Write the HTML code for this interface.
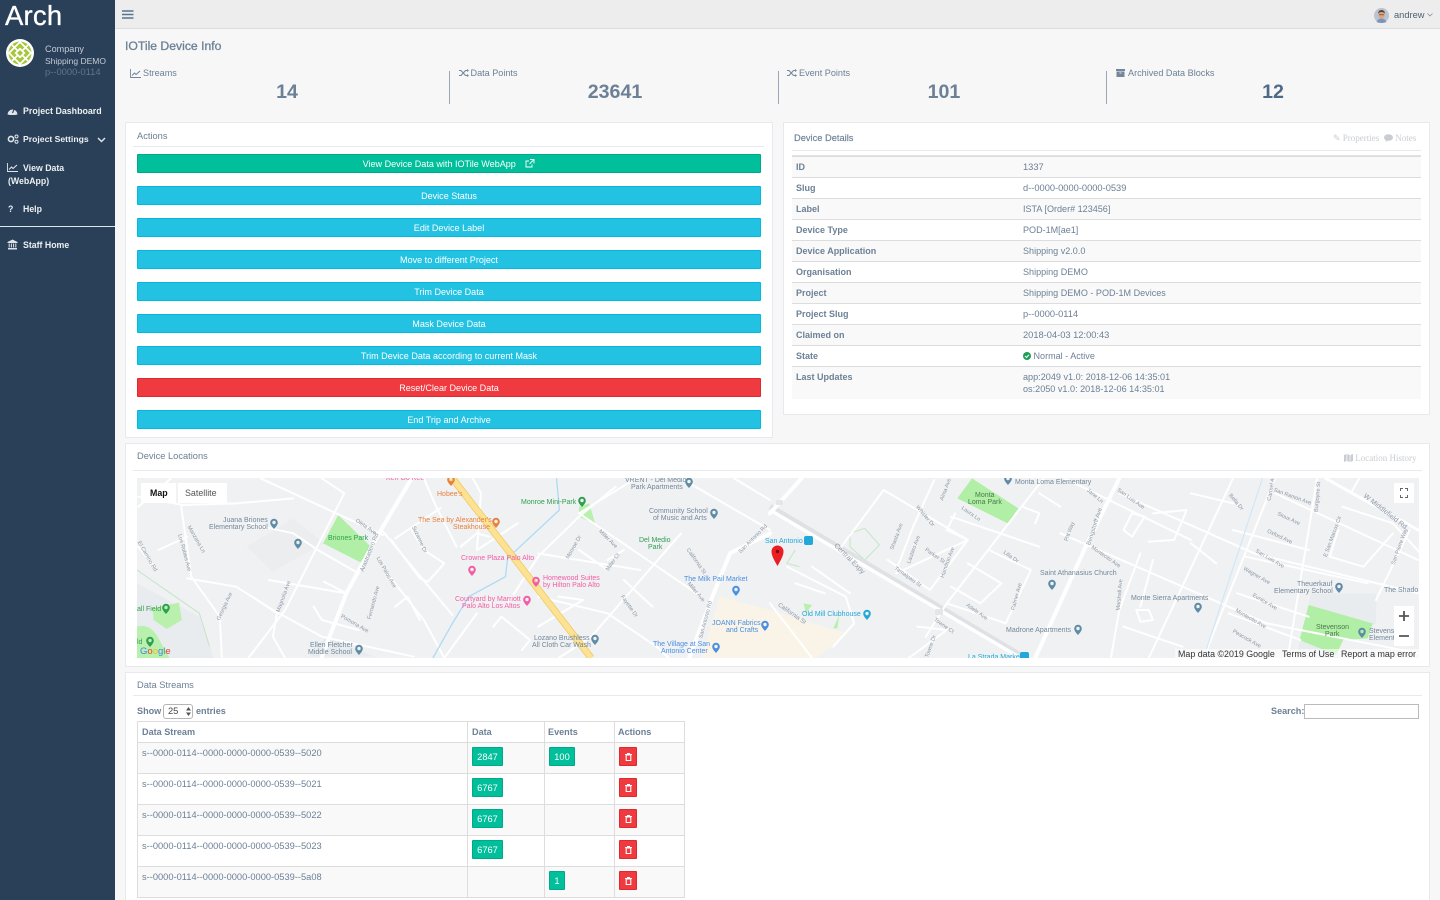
<!DOCTYPE html>
<html><head><meta charset="utf-8"><title>IOTile Device Info</title>
<style>
html,body{margin:0;padding:0;width:1440px;height:900px;overflow:hidden;background:#f7f7f7}
body{position:relative;font-family:"Liberation Sans",sans-serif;font-size:9.3px;color:#6c8096}
.a,.t,.b{position:absolute}
.t{white-space:nowrap;line-height:12px}
.bo{font-weight:bold;font-size:9.1px}
.panel{position:absolute;background:#fff;border:1px solid #e6e9ed;box-sizing:border-box}
.line{position:absolute;height:1px;background:#e6e9ed}
.b{left:137px;width:624px;height:19px;box-sizing:border-box;border:1px solid #00b9dc;background:#23c2e2;color:#fff;text-align:center;line-height:19px;border-radius:1px;font-size:9.05px}
.g{background:#00bf9a;border-color:#00a987}
.r{background:#ef3a40;border-color:#dc2a30}
.side{color:#ecf0f1;font-weight:bold;font-size:8.75px}
.row{position:absolute;left:792px;width:629px;height:21px;box-sizing:border-box;border-top:1px solid #ddd}
.row b{position:absolute;left:4px;top:4px;line-height:12px;font-size:9px}
.row span{position:absolute;left:231px;top:4px;line-height:12px}
.row span.n{font-size:9.05px}
.odd{background:#f9f9f9}
.bd{position:absolute;box-sizing:border-box;background:#00bf9a;border:1px solid #00a987;color:#fff;height:19px;line-height:19px;text-align:center;border-radius:1px}
.del{position:absolute;left:619px;width:18px;height:19px;box-sizing:border-box;background:#ef3a40;border:1px solid #dc2a30;border-radius:1px}
.vl{position:absolute;width:1px;background:#ddd}
.hl{position:absolute;height:1px;background:#ddd;left:137px;width:548px}
svg{position:absolute;overflow:hidden}
.rd path{fill:none;stroke:#fff;stroke-width:2;vector-effect:non-scaling-stroke;stroke-linecap:round;stroke-linejoin:round}
.lb text{font-family:"Liberation Sans",sans-serif;font-size:7px}
.st text{font-family:"Liberation Sans",sans-serif;font-size:5.5px;fill:#8b98a5;text-anchor:middle}
.big{font-weight:bold;font-size:19.6px;line-height:24px;text-align:center;width:160px;top:79.500px}
.lt{color:#c9cdd2;font-family:'Liberation Serif',serif;font-size:9px}
</style></head><body>

<div class="a" style="left:0;top:0;width:115px;height:900px;background:#2a3f58"></div>
<div class="t" style="left:5px;top:1px;font-size:27.500px;line-height:30px;color:#fff;letter-spacing:.2px;-webkit-text-stroke:.3px #fff">Arch</div>
<svg style="left:6px;top:39px" width="28" height="28" viewBox="0 0 28 28">
<circle cx="14" cy="14" r="14" fill="#fff"/>
<circle cx="14" cy="14" r="11.5" fill="#a6c73c"/>
<path d="M14 3L25 14L14 25L3 14Z M6 6L22 22M22 6L6 22" fill="none" stroke="#fff" stroke-width="1.700"/>
<path d="M14 8.500L19.500 14L14 19.500L8.500 14Z" fill="#fff"/><path d="M14 11L17 14L14 17L11 14Z" fill="#a6c73c"/>
</svg>
<div class="t" style="left:45px;top:43px;color:#c3ccd6;font-size:9.1px">Company</div>
<div class="t" style="left:45px;top:55px;color:#c3ccd6;font-size:8.500px">Shipping DEMO</div>
<div class="t" style="left:45px;top:66px;color:#5f7690;font-size:9.4px">p--0000-0114</div>

<svg style="left:7px;top:106px" width="11" height="10" viewBox="0 0 11 10"><path d="M.5 8.500A5 5 0 1 1 10.500 8.500L8 9H3Z" fill="#dfe4e9"/><path d="M5.500 7L7 3.500" stroke="#2a3f58" stroke-width="1"/></svg>
<div class="t side" style="left:23px;top:105px;font-size:8.850px">Project Dashboard</div>
<svg style="left:7px;top:134px" width="12" height="10" viewBox="0 0 12 10"><circle cx="4" cy="5" r="2.600" fill="none" stroke="#dfe4e9" stroke-width="1.600"/><circle cx="9.500" cy="2.500" r="1.500" fill="none" stroke="#dfe4e9"/><circle cx="9.500" cy="7.800" r="1.500" fill="none" stroke="#dfe4e9"/></svg>
<div class="t side" style="left:23px;top:133px;font-size:8.650px">Project Settings</div>
<svg style="left:97px;top:137px" width="9" height="6" viewBox="0 0 9 6"><path d="M1 1L4.500 4.500L8 1" fill="none" stroke="#dfe4e9" stroke-width="1.500"/></svg>
<svg style="left:7px;top:163px" width="11" height="9" viewBox="0 0 11 9"><path d="M.5 0V8.500H11" fill="none" stroke="#dfe4e9" stroke-width=".9"/><path d="M2 6.500L4.500 4L6 5.500L10 2" fill="none" stroke="#dfe4e9" stroke-width="1.100"/></svg>
<div class="t side" style="left:23px;top:162px">View Data</div>
<div class="t side" style="left:8px;top:175px">(WebApp)</div>
<div class="t side" style="left:8px;top:203px">?</div>
<div class="t side" style="left:23px;top:203px">Help</div>
<div class="a" style="left:0;top:226px;width:115px;height:1px;background:#dfe4e9"></div>
<svg style="left:7px;top:239px" width="11" height="11" viewBox="0 0 11 11"><path d="M5.500 .5L10.500 3V4H.5V3Z M1 9H10V10.500H1Z" fill="#dfe4e9"/><path d="M2.200 4.500V8.500M4.400 4.500V8.500M6.600 4.500V8.500M8.800 4.500V8.500" stroke="#dfe4e9" stroke-width="1"/></svg>
<div class="t side" style="left:23px;top:239px">Staff Home</div>

<div class="a" style="left:115px;top:0;width:1325px;height:28px;background:#ededed;border-bottom:1px solid #d9dee4"></div>
<svg style="left:122px;top:10px" width="12" height="10" viewBox="0 0 12 10"><path d="M0 1H11.500M0 4.500H11.500M0 8H11.500" stroke="#5a738e" stroke-width="1.600"/></svg>
<svg style="left:1374px;top:8px" width="15" height="15" viewBox="0 0 15 15"><circle cx="7.500" cy="7.500" r="7.500" fill="#b9c4d2"/><ellipse cx="7.500" cy="6.500" rx="3.300" ry="4" fill="#d9a585"/><path d="M4 5.500Q4.500 2 7.500 2Q10.500 2 11 5.500Q9 3.800 7.500 4Q5.500 4 4 5.500Z" fill="#5b4030"/><path d="M2.500 14Q4 10.500 7.500 10.500Q11 10.500 12.500 14Q7.500 16 2.500 14Z" fill="#7f93b5"/><path d="M5.200 6.800H9.800" stroke="#5b4030" stroke-width=".7"/></svg>
<div class="t" style="left:1394px;top:9px;color:#4f5f6f">andrew</div>
<svg style="left:1427px;top:13px" width="6" height="4" viewBox="0 0 6 4"><path d="M.5 .5L3 3L5.500 .5" fill="none" stroke="#73879c" stroke-width=".7"/></svg>

<div class="t" style="left:125px;top:39.500px;font-size:12.200px;line-height:13px;-webkit-text-stroke:.3px #6c8096">IOTile Device Info</div>

<svg style="left:130px;top:69px" width="11" height="9" viewBox="0 0 11 9"><path d="M.5 0V8.500H11" fill="none" stroke="#73879c" stroke-width=".9"/><path d="M2 6.500L4.500 4L6 5.500L10 2" fill="none" stroke="#73879c" stroke-width="1.100"/></svg>
<div class="t" style="left:143px;top:67px;font-size:9.1px">Streams</div>
<div class="t big" style="left:207px">14</div>
<div class="a" style="left:449px;top:71px;width:1px;height:33px;background:#9aa8b6"></div>
<svg style="left:459px;top:69px" width="10" height="8" viewBox="0 0 10 8"><path d="M0 1.500H2L6.500 6.500H9M0 6.500H2L6.500 1.500H9" fill="none" stroke="#73879c" stroke-width="1.100"/><path d="M8 0L10 1.500L8 3ZM8 5L10 6.500L8 8Z" fill="#73879c"/></svg>
<div class="t" style="left:470.500px;top:67px;font-size:9.1px">Data Points</div>
<div class="t big" style="left:535px">23641</div>
<div class="a" style="left:778px;top:71px;width:1px;height:33px;background:#9aa8b6"></div>
<svg style="left:787px;top:69px" width="10" height="8" viewBox="0 0 10 8"><path d="M0 1.500H2L6.500 6.500H9M0 6.500H2L6.500 1.500H9" fill="none" stroke="#73879c" stroke-width="1.100"/><path d="M8 0L10 1.500L8 3ZM8 5L10 6.500L8 8Z" fill="#73879c"/></svg>
<div class="t" style="left:799px;top:67px;font-size:9.1px">Event Points</div>
<div class="t big" style="left:864px">101</div>
<div class="a" style="left:1106px;top:71px;width:1px;height:33px;background:#9aa8b6"></div>
<svg style="left:1116px;top:69px" width="10" height="8" viewBox="0 0 10 8"><path d="M0 0H9V2H0ZM.5 2.500H8.500V8H.5Z" fill="#73879c"/><path d="M3.500 4H5.500" stroke="#f7f7f7" stroke-width=".8"/></svg>
<div class="t" style="left:1128px;top:67px;font-size:9.1px">Archived Data Blocks</div>
<div class="t big" style="left:1193px;color:#4f6a87">12</div>

<div class="panel" style="left:125px;top:122px;width:648px;height:316px"></div>
<div class="t" style="left:137px;top:130px">Actions</div>
<div class="line" style="left:133px;top:146px;width:631px"></div>
<div class="b g" style="top:154px">View Device Data with IOTile WebApp <svg style="position:static;vertical-align:-1px;margin-left:7px" width="10" height="9" viewBox="0 0 10 9"><path d="M7 5.500V8H1V2H4M5 .5H9V4.500M9 .5L4.500 5" fill="none" stroke="#fff" stroke-width=".9"/></svg></div>
<div class="b" style="top:186px">Device Status</div>
<div class="b" style="top:218px">Edit Device Label</div>
<div class="b" style="top:250px">Move to different Project</div>
<div class="b" style="top:282px">Trim Device Data</div>
<div class="b" style="top:314px">Mask Device Data</div>
<div class="b" style="top:346px">Trim Device Data according to current Mask</div>
<div class="b r" style="top:378px">Reset/Clear Device Data</div>
<div class="b" style="top:410px">End Trip and Archive</div>

<div class="panel" style="left:783px;top:122px;width:647px;height:293px"></div>
<div class="t" style="left:794px;top:132px;-webkit-text-stroke:.15px #6c8096">Device Details</div>
<div class="t lt" style="left:1333px;top:132px">✎ Properties</div>
<div class="t lt" style="left:1384px;top:132px"><svg style="position:static;vertical-align:-1px" width="9" height="8" viewBox="0 0 9 8"><ellipse cx="4.500" cy="3.500" rx="4.500" ry="3.300" fill="#c9cdd2"/><path d="M2 6L1.500 8L4 6.500Z" fill="#c9cdd2"/></svg> Notes</div>
<div class="line" style="left:792px;top:150px;width:629px"></div>
<div class="a" style="left:792px;top:155px;width:629px;height:2px;background:#e2e2e2"></div>
<div class="row odd" style="top:156px"><b>ID</b><span>1337</span></div>
<div class="row" style="top:177px"><b>Slug</b><span>d--0000-0000-0000-0539</span></div>
<div class="row odd" style="top:198px"><b>Label</b><span class="n">ISTA [Order# 123456]</span></div>
<div class="row" style="top:219px"><b>Device Type</b><span class="n">POD-1M[ae1]</span></div>
<div class="row odd" style="top:240px"><b>Device Application</b><span class="n">Shipping v2.0.0</span></div>
<div class="row" style="top:261px"><b>Organisation</b><span class="n">Shipping DEMO</span></div>
<div class="row odd" style="top:282px"><b>Project</b><span class="n">Shipping DEMO - POD-1M Devices</span></div>
<div class="row" style="top:303px"><b>Project Slug</b><span>p--0000-0114</span></div>
<div class="row odd" style="top:324px"><b>Claimed on</b><span>2018-04-03 12:00:43</span></div>
<div class="row" style="top:345px"><b>State</b><span class="n"><svg style="position:static;vertical-align:-1px" width="8" height="8" viewBox="0 0 8 8"><circle cx="4" cy="4" r="4" fill="#1f9d55"/><path d="M2 4L3.500 5.500L6 2.800" fill="none" stroke="#fff" stroke-width="1.100"/></svg> Normal - Active</span></div>
<div class="row odd" style="top:366px;height:33px"><b>Last Updates</b><span style="font-size:9.1px">app:2049 v1.0: 2018-12-06 14:35:01<br>os:2050 v1.0: 2018-12-06 14:35:01</span></div>

<div class="panel" style="left:125px;top:443px;width:1305px;height:224px"></div>
<div class="t" style="left:137px;top:450px">Device Locations</div>
<div class="t lt" style="left:1344px;top:452px"><svg style="position:static;vertical-align:-1px" width="9" height="8" viewBox="0 0 9 8"><path d="M0 1L2.500 0V7L0 8ZM3.200 0L5.700 1V8L3.200 7ZM6.400 1L9 0V7L6.400 8Z" fill="#c9cdd2"/></svg> Location History</div>
<div class="line" style="left:133px;top:470px;width:1289px"></div>

<svg style="left:137px;top:478px" width="1282" height="180" viewBox="137 478 1282 180">
<defs><path id="p" d="M0 0C-3.200 -3.500 -3.800 -5 -3.800 -6.500A3.800 3.800 0 1 1 3.800 -6.500C3.800 -5 3.200 -3.500 0 0ZM0 -8.200A1.700 1.700 0 1 0 0 -4.800A1.700 1.700 0 1 0 0 -8.200Z" fill-rule="evenodd"/></defs>
<rect x="137" y="478" width="1282" height="180" fill="#f0f1f3"/>
<g style="filter:blur(.3px)">
<g transform="translate(130,450) scale(.40816,.33333)">
<path d="M17 400L170 500L205 624H17Z" fill="#e9ecee"/>
<path d="M285 290L400 205L475 280L350 365Z" fill="#ebedef"/>
<path d="M480 560L600 620H440Z" fill="#e9ecee"/>
<path d="M1400 624L1445 440L1568 480V624Z" fill="#f9f4e7"/>
<path d="M510 195L590 290L565 337L473 280Z" fill="#b1efa6"/>
<path d="M55 475L120 458L127 510L90 537L58 510Z" fill="#b9f0ae"/>
<path d="M17 530Q45 520 65 555L97 624H17Z" fill="#b9f0ae"/>
<path d="M1100 170L1125 160L1140 222L1100 200Z" fill="#b9f0ae"/>
<g class="rd">
<path style="stroke-width:4" d="M690 85L610 250L530 430L470 620"/>
<path d="M320 85L620 255M125 165L150 380L220 500L225 624M20 140L130 165L260 160L400 145M525 130L380 480L290 624M470 85L525 130M620 245L790 495M650 265L760 175M690 240L720 300L770 340L730 395L710 385L640 270M260 410L350 480L470 560L695 620M260 410L140 385M340 390L530 430M475 395L530 430M560 370L460 300L400 250L290 220M630 370L720 510L770 624M720 85L750 170L800 290M840 85L860 130L850 300M1190 110L1100 200L1000 320L920 470M1100 190L1400 440M1350 250L1130 560L1050 624M1000 310L1250 360M1000 440L1170 490L1290 590L1320 624M850 490L770 624M1050 440L1110 450L1000 530M300 440L360 490L350 560L380 624M450 470L470 510L560 540M650 470L680 440L710 510M890 530L910 500L980 570L960 600M1240 85L1100 190M1480 85L1568 150M1350 85L1568 240M1210 390L1280 470M1170 330L1210 300M1100 300L1170 360M850 300L950 220M810 290L850 250L880 260M20 290L60 350M70 300L140 260M20 170L60 130L100 85"/>
<path style="stroke-width:4" d="M1568 250L1470 310L1430 430L1370 624"/>
</g>
<path d="M1045 85L1052 180L925 325L920 380L830 440L790 520L742 624" fill="none" stroke="#aedaf5" stroke-width="1.300" vector-effect="non-scaling-stroke"/>
<path d="M17 360L170 490L195 590" fill="none" stroke="#c5e3c8" stroke-width="1" vector-effect="non-scaling-stroke"/>
<path d="M790 85L1130 624" fill="none" stroke="#ecc95e" stroke-width="7" vector-effect="non-scaling-stroke"/>
<path d="M790 85L1130 624" fill="none" stroke="#fde293" stroke-width="5.500" vector-effect="non-scaling-stroke"/>
</g>
<g transform="translate(770,450) scale(.42088,.33333)">
<path d="M0 480L100 520L185 550L110 624H0Z" fill="#f9f4e7"/>
<path d="M1285 430L1440 430L1440 520L1360 570L1345 624H1250Z" fill="#e9ecee"/>
<path d="M480 85L590 175L565 220L445 145Z" fill="#b1efa6"/>
<path d="M1280 465L1432 520L1420 565L1362 570L1345 615L1258 570Z" fill="#b1efa6"/>
<path d="M80 460L100 465L85 490ZM165 495L160 535L150 535Z" fill="#b9f0ae"/>
<path d="M190 250L225 235L260 285L225 330L190 290Z M60 300L40 340L70 350" fill="none" stroke="#c3e8c2" stroke-width="1" vector-effect="non-scaling-stroke"/>
<path d="M0 170L600 620" fill="none" stroke="#dfe1e4" stroke-width="6" vector-effect="non-scaling-stroke"/>
<path d="M0 180L590 620" fill="none" stroke="#fff" stroke-width="3.500" vector-effect="non-scaling-stroke"/>
<g class="rd">
<path style="stroke-width:4" d="M75 85L0 190M830 85L750 290L630 624"/>
<path d="M650 85L420 460L370 560M270 120L170 290M270 120L470 270L380 420L280 330M470 270L300 370M430 200L640 290M440 190L420 240L470 270M520 300L620 360L560 520L420 460M470 340L550 400L500 460L430 410M390 90L340 230L300 360M700 85L1000 270M830 130L1150 310L1540 430M690 250L1180 520L1540 610M1100 85L900 624M1200 85L1030 624M1300 85L1230 624M1200 130L1540 330M1100 240L1280 300M1130 320L1420 400M1110 430L1280 500M1090 490L1260 570M40 350L180 440L200 520L150 590M100 350L190 430M60 400L130 430M640 130L690 170M600 170L640 190L630 220M860 190L890 200L860 260L840 240L860 190M910 190L990 180L960 270L900 275M880 310L830 480L810 624M910 330L880 470M1000 280L1060 340M840 530L980 590M870 480L900 480L910 510L880 515ZM1360 170L1480 220L1560 330M1480 250L1410 350L1330 320L1350 240M1400 85L1380 130M1520 240L1440 450M1000 130L1100 160M350 530L420 540L330 624M0 460L100 624"/>
<path style="stroke-width:3" d="M1320 85L1540 240"/>
</g>
<path d="M1170 85L1030 624" fill="none" stroke="#cfe8f8" stroke-width="1.200" vector-effect="non-scaling-stroke"/>
</g>

<g class="lb">
<text x="386" y="480" fill="#f25da4">Ken Go Kee</text>
<use href="#p" x="451" y="486" fill="#e8813a"/>
<text x="437" y="496" fill="#e8813a">Hobee's</text>
<text x="418" y="522" fill="#e8813a">The Sea by Alexander's</text>
<text x="453" y="529" fill="#e8813a">Steakhouse</text>
<use href="#p" x="496" y="528" fill="#e8813a"/>
<text x="461" y="560" fill="#f25da4">Crowne Plaza Palo Alto</text>
<use href="#p" x="472" y="576" fill="#f25da4"/>
<use href="#p" x="536" y="587" fill="#f25da4"/>
<text x="543" y="580" fill="#f25da4">Homewood Suites</text>
<text x="543" y="587" fill="#f25da4">by Hilton Palo Alto</text>
<text x="455" y="601" fill="#f25da4">Courtyard by Marriott</text>
<text x="462" y="608" fill="#f25da4">Palo Alto Los Altos</text>
<use href="#p" x="527" y="606" fill="#f25da4"/>
<text x="521" y="504" fill="#2e9e4f">Monroe Mini-Park</text>
<use href="#p" x="582" y="507" fill="#2e9e4f"/>
<text x="639" y="542" fill="#2e9e4f">Del Medio</text>
<text x="648" y="549" fill="#2e9e4f">Park</text>
<text x="328" y="540" fill="#2e9e4f">Briones Park</text>
<text x="137" y="611" fill="#2e9e4f">all Field</text>
<use href="#p" x="166" y="614" fill="#2e9e4f"/>
<text x="137" y="644" fill="#2e9e4f">ld</text>
<use href="#p" x="150" y="647" fill="#2e9e4f"/>
<g fill="#74889a">
<text x="223" y="522">Juana Briones</text><text x="209" y="529">Elementary School</text>
<use href="#p" x="274" y="529" fill="#5f8ba5"/>
<use href="#p" x="298" y="549" fill="#5f8ba5"/>
<text x="310" y="647">Ellen Fletcher</text><text x="308" y="654">Middle School</text>
<use href="#p" x="359" y="655" fill="#5f8ba5"/>
<text x="625" y="482">VRENT - Del Medio</text><text x="631" y="489">Park Apartments</text>
<use href="#p" x="689" y="488" fill="#5f8ba5"/>
<text x="649" y="513">Community School</text><text x="653" y="520">of Music and Arts</text>
<use href="#p" x="714" y="519" fill="#5f8ba5"/>
<text x="534" y="640">Lozano Brushless</text><text x="532" y="647">All Cloth Car Wash</text>
<use href="#p" x="595" y="645" fill="#5f8ba5"/>
<text x="1015" y="484">Monta Loma Elementary</text>
<use href="#p" x="1008" y="485" fill="#5f8ba5"/>
<text x="1040" y="575">Saint Athanasius Church</text>
<use href="#p" x="1052" y="590" fill="#5f8ba5"/>
<text x="1131" y="600">Monte Sierra Apartments</text>
<use href="#p" x="1198" y="613" fill="#5f8ba5"/>
<text x="1006" y="632">Madrone Apartments</text>
<use href="#p" x="1078" y="635" fill="#5f8ba5"/>
<text x="1297" y="586">Theuerkauf</text><text x="1274" y="593">Elementary School</text>
<use href="#p" x="1339" y="593" fill="#5f8ba5"/>
<text x="1384" y="592">The Shado</text>
<use href="#p" x="1362" y="638" fill="#5f8ba5"/>
<text x="1369" y="633">Stevens</text><text x="1369" y="640">Element</text>
</g>
<text x="975" y="497" fill="#4a7a4a">Monta</text><text x="968" y="504" fill="#4a7a4a">Loma Park</text>
<text x="1316" y="629" fill="#4a7a4a">Stevenson</text><text x="1325" y="636" fill="#4a7a4a">Park</text>
<g fill="#4a8fe0">
<text x="684" y="581">The Milk Pail Market</text>
<use href="#p" x="736" y="596"/>
<text x="712" y="625">JOANN Fabrics</text><text x="726" y="632">and Crafts</text>
<use href="#p" x="765" y="631"/>
<text x="653" y="646">The Village at San</text><text x="661" y="653">Antonio Center</text>
<use href="#p" x="716" y="653"/>
</g>
<g fill="#21a8d8">
<text x="765" y="543">San Antonio</text>
<rect x="804" y="536" width="9" height="9" rx="2"/>
<text x="802" y="616">Old Mill Clubhouse</text>
<use href="#p" x="867" y="620"/>
<text x="968" y="659">La Strada Market</text>
<rect x="1020" y="652" width="9" height="9" rx="2"/>
</g>
</g>
<g class="st">
<rect x="776" y="500" width="7" height="5" rx="1" fill="#e4e6e8"/><rect x="935" y="609" width="8" height="6" rx="1" fill="#e4e6e8"/>
<text style="font-size:7px" transform="translate(1384,513) rotate(38)">W Middlefield Rd</text>
<text style="font-size:7px" transform="translate(848,560) rotate(45)">Central Expy</text>
<text style="font-size:6px" transform="translate(1096,527) rotate(-72)">Bengstorff Ave</text>
<text style="font-size:6px" transform="translate(371,553) rotate(-68)">Arastradero Rd</text>
<text style="font-size:6px" transform="translate(791,615) rotate(35)">California St</text>
<text transform="translate(365,528) rotate(35)">Oleta Ave</text>
<text transform="translate(385,573) rotate(60)">Los Palos Ave</text>
<text transform="translate(375,603) rotate(-75)">Fernando Ave</text>
<text transform="translate(354,625) rotate(30)">Pomona Ave</text>
<text transform="translate(226,607) rotate(-65)">Georgia Ave</text>
<text transform="translate(285,597) rotate(-70)">Magnolia Ave</text>
<text transform="translate(183,553) rotate(75)">Los Robles Ave</text>
<text transform="translate(195,540) rotate(60)">Manzana Ln</text>
<text transform="translate(146,557) rotate(60)">El Camino Rd</text>
<text transform="translate(418,540) rotate(65)">Suzanne Dr</text>
<text transform="translate(575,548) rotate(-60)">Monroe Dr</text>
<text transform="translate(695,562) rotate(55)">California St</text>
<text transform="translate(607,540) rotate(45)">Miller Ave</text>
<text transform="translate(614,563) rotate(-55)">Miller Ct</text>
<text transform="translate(695,593) rotate(50)">Miller Ave</text>
<text transform="translate(628,607) rotate(55)">Fayette Dr</text>
<text transform="translate(707,620) rotate(-75)">San Antonio Rd</text>
<text transform="translate(754,540) rotate(-45)">San Antonio Rd</text>
<text transform="translate(907,578) rotate(35)">Tamalpais St</text>
<text transform="translate(934,557) rotate(35)">Parker St</text>
<text transform="translate(949,563) rotate(-70)">Hamilton Ave</text>
<text transform="translate(915,550) rotate(-70)">Lautaro Ave</text>
<text transform="translate(898,537) rotate(-70)">Shasta Ave</text>
<text transform="translate(924,517) rotate(50)">Whisler Dr</text>
<text transform="translate(970,515) rotate(35)">Laura Ln</text>
<text transform="translate(947,490) rotate(-70)">Alma Ave</text>
<text transform="translate(1130,500) rotate(35)">San Luis Ave</text>
<text transform="translate(1094,497) rotate(40)">Jane Ln</text>
<text transform="translate(1071,532) rotate(-70)">Pitt Way</text>
<text transform="translate(1105,558) rotate(35)">Montecito Ave</text>
<text transform="translate(1010,558) rotate(35)">Lilla Dr</text>
<text transform="translate(1018,597) rotate(-75)">Palmer Ave</text>
<text transform="translate(976,613) rotate(35)">Adele Ave</text>
<text transform="translate(1121,595) rotate(-85)">Marshall Ave</text>
<text transform="translate(943,627) rotate(35)">Towne Ct</text>
<text transform="translate(932,647) rotate(-70)">Towne Dr</text>
<text transform="translate(1292,498) rotate(20)">San Ramon Ave</text>
<text transform="translate(1288,520) rotate(25)">Sioux Ave</text>
<text transform="translate(1279,538) rotate(25)">Oxford Ave</text>
<text transform="translate(1269,560) rotate(30)">San Luis Ave</text>
<text transform="translate(1256,577) rotate(30)">Wagner Ave</text>
<text transform="translate(1264,603) rotate(30)">Eunice Ave</text>
<text transform="translate(1250,620) rotate(30)">Montecito Ave</text>
<text transform="translate(1246,640) rotate(30)">Peacock Ave</text>
<text transform="translate(1235,503) rotate(50)">Bella Dr</text>
<text transform="translate(1319,497) rotate(-85)">Burgoyne St</text>
<text transform="translate(1273,487) rotate(-80)">Carmel Ave</text>
<text transform="translate(1401,547) rotate(-70)">San Pierre Way</text>
<text transform="translate(1334,537) rotate(-70)">E San Marcos Cir</text>
</g>
</g>
<path d="M777.500 566C773 558 771.500 555 771.500 551.500A6 6 0 1 1 783.500 551.500C783.500 555 782 558 777.500 566Z" fill="#ea1d25"/>
<circle cx="777.500" cy="551.500" r="1.700" fill="#7a0b10"/>
<rect x="141" y="483" width="86" height="20" fill="#fff"/>
<path d="M177 483V503" stroke="#e6e6e6"/>
<text x="150" y="496" font-family="Liberation Sans" font-size="8.800" font-weight="bold" fill="#111">Map</text>
<text x="185" y="496" font-family="Liberation Sans" font-size="8.900" fill="#555">Satellite</text>
<rect x="1394" y="483" width="20" height="20" fill="#fff"/>
<path d="M1400.500 491V488.500H1403M1405 488.500H1407.500V491M1400.500 495V497.500H1403M1405 497.500H1407.500V495" fill="none" stroke="#666" stroke-width="1"/>
<rect x="1394" y="606" width="20" height="40" fill="#fff"/>
<path d="M1399 616H1409M1404 611V621M1399 636H1409" stroke="#555" stroke-width="1.800"/>
<text x="140" y="654" font-family="Liberation Sans" font-size="9.500" fill="#4285f4">G<tspan fill="#ea4335">o</tspan><tspan fill="#fbbc05">o</tspan>g<tspan fill="#34a853">l</tspan><tspan fill="#ea4335">e</tspan></text>
<rect x="1175" y="649" width="244" height="9" fill="#fff" opacity=".6"/>
</svg>
<div class="t" style="left:1178px;top:648px;font-size:8.900px;color:#333">Map data ©2019 Google</div>
<div class="t" style="left:1282px;top:648px;font-size:8.900px;color:#333">Terms of Use</div>
<div class="t" style="left:1341px;top:648px;font-size:8.900px;color:#333">Report a map error</div>

<div class="panel" style="left:125px;top:672px;width:1305px;height:240px"></div>
<div class="t" style="left:137px;top:679px">Data Streams</div>
<div class="line" style="left:133px;top:695px;width:1289px"></div>
<div class="t bo" style="left:137px;top:705px">Show</div>
<div class="a" style="left:163px;top:704px;width:30px;height:15px;box-sizing:border-box;border:1px solid #b5b5b5;border-radius:3px;background:#fff"></div>
<div class="t" style="left:168px;top:705px;color:#444">25</div>
<svg style="left:186px;top:707px" width="5" height="9" viewBox="0 0 5 9"><path d="M2.500 0L5 3.500H0ZM2.500 9L0 5.500H5Z" fill="#555"/></svg>
<div class="t bo" style="left:196px;top:705px">entries</div>
<div class="t bo" style="left:1271px;top:705px">Search:</div>
<div class="a" style="left:1304px;top:704px;width:115px;height:15px;box-sizing:border-box;border:1px solid #bbb;background:#fff"></div>

<div class="a" style="left:138px;top:722px;width:547px;height:176px;background:#fff"></div>
<div class="a" style="left:138px;top:743px;width:547px;height:31px;background:#f9f9f9"></div>
<div class="a" style="left:138px;top:805px;width:547px;height:31px;background:#f9f9f9"></div>
<div class="a" style="left:138px;top:867px;width:547px;height:31px;background:#f9f9f9"></div>
<div class="hl" style="top:721px"></div><div class="hl" style="top:742px"></div><div class="hl" style="top:773px"></div><div class="hl" style="top:804px"></div><div class="hl" style="top:835px"></div><div class="hl" style="top:866px"></div><div class="hl" style="top:897px"></div>
<div class="vl" style="left:137px;top:721px;height:177px"></div><div class="vl" style="left:467px;top:721px;height:177px"></div><div class="vl" style="left:544px;top:721px;height:177px"></div><div class="vl" style="left:614px;top:721px;height:177px"></div><div class="vl" style="left:684px;top:721px;height:177px"></div>
<div class="t bo" style="left:142px;top:726px">Data Stream</div>
<div class="t bo" style="left:472px;top:726px">Data</div>
<div class="t bo" style="left:548px;top:726px">Events</div>
<div class="t bo" style="left:618px;top:726px">Actions</div>
<div class="t" style="left:142px;top:747px">s--0000-0114--0000-0000-0000-0539--5020</div>
<div class="t" style="left:142px;top:778px">s--0000-0114--0000-0000-0000-0539--5021</div>
<div class="t" style="left:142px;top:809px">s--0000-0114--0000-0000-0000-0539--5022</div>
<div class="t" style="left:142px;top:840px">s--0000-0114--0000-0000-0000-0539--5023</div>
<div class="t" style="left:142px;top:871px">s--0000-0114--0000-0000-0000-0539--5a08</div>
<div class="bd" style="left:472px;top:747px;width:31px">2847</div>
<div class="bd" style="left:472px;top:778px;width:31px">6767</div>
<div class="bd" style="left:472px;top:809px;width:31px">6767</div>
<div class="bd" style="left:472px;top:840px;width:31px">6767</div>
<div class="bd" style="left:549px;top:747px;width:26px">100</div>
<div class="bd" style="left:549px;top:871px;width:16px">1</div>
<div class="del" style="top:747px"><svg style="left:4.500px;top:4.500px" width="7" height="8" viewBox="0 0 7 8"><path d="M0 1.500H7M2.500 1.300V.4H4.500V1.300M1.200 2H5.800V7.500H1.200Z" fill="none" stroke="#fff" stroke-width="1.100"/></svg></div>
<div class="del" style="top:778px"><svg style="left:4.500px;top:4.500px" width="7" height="8" viewBox="0 0 7 8"><path d="M0 1.500H7M2.500 1.300V.4H4.500V1.300M1.200 2H5.800V7.500H1.200Z" fill="none" stroke="#fff" stroke-width="1.100"/></svg></div>
<div class="del" style="top:809px"><svg style="left:4.500px;top:4.500px" width="7" height="8" viewBox="0 0 7 8"><path d="M0 1.500H7M2.500 1.300V.4H4.500V1.300M1.200 2H5.800V7.500H1.200Z" fill="none" stroke="#fff" stroke-width="1.100"/></svg></div>
<div class="del" style="top:840px"><svg style="left:4.500px;top:4.500px" width="7" height="8" viewBox="0 0 7 8"><path d="M0 1.500H7M2.500 1.300V.4H4.500V1.300M1.200 2H5.800V7.500H1.200Z" fill="none" stroke="#fff" stroke-width="1.100"/></svg></div>
<div class="del" style="top:871px"><svg style="left:4.500px;top:4.500px" width="7" height="8" viewBox="0 0 7 8"><path d="M0 1.500H7M2.500 1.300V.4H4.500V1.300M1.200 2H5.800V7.500H1.200Z" fill="none" stroke="#fff" stroke-width="1.100"/></svg></div>
</body></html>
